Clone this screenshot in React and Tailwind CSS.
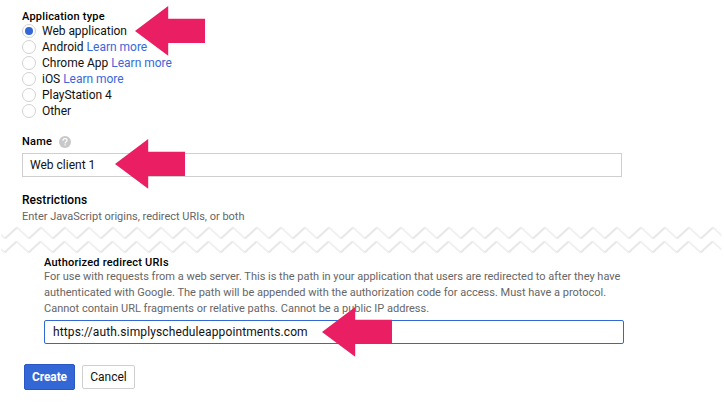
import React from "react";

const types = [
  { label: "Web application", checked: true, spacing: "tracking-[-0.04px]" },
  { label: "Android", link: true, spacing: "tracking-[-0.01px]" },
  { label: "Chrome App", link: true, spacing: "tracking-[-0.01px]" },
  { label: "iOS", link: true, spacing: "tracking-[-0.03px]" },
  { label: "PlayStation 4", spacing: "tracking-[-0.03px]" },
  { label: "Other", spacing: "tracking-[-0.03px]" },
];

function Arrow({ className }) {
  return (
    <svg className={`absolute h-[50px] w-[71px] ${className}`} viewBox="0 0 71 50" aria-hidden="true">
      <path d="M0 25 L33.2 0 V12.8 H70 V37 H33.2 V49.7 Z" fill="#e91e63" />
    </svg>
  );
}

function Zigzag({ start, y }) {
  const tiles = Array.from({ length: 31 }, (_, i) => start + i * 24);
  return (
    <g>
      {tiles.map((x) => (
        <g key={x} fill="none">
          <path d={`M${x + 12} ${y} L${x + 24} ${y + 11}`} stroke="#f0f0f0" strokeWidth="1.8" />
          <path d={`M${x} ${y + 11} L${x + 12} ${y}`} stroke="#e8e8e8" strokeWidth="2.2" />
        </g>
      ))}
    </g>
  );
}

export default function App() {
  return (
    <main className="relative h-[407px] w-[724px] overflow-hidden bg-white font-[Roboto,sans-serif] text-[12px] leading-4 text-[#111]">
      <section className="pt-[9px] pl-[22px]">
        <h2 className="h-[14px] text-[11px] font-medium tracking-[0.2px] text-black">Application type</h2>
        {types.map((t) => (
          <label key={t.label} className="flex h-4 items-center">
            <span className="mr-[6px] flex size-[14px] shrink-0 items-center justify-center rounded-full border border-[#d2d2d2]">
              {t.checked && <span className="size-2 rounded-full bg-[#3367d6]" />}
            </span>
            <span className={`whitespace-pre ${t.spacing}`}>
              {t.label}
              {t.link && <span className="text-[#3b67d8]"> Learn more</span>}
            </span>
          </label>
        ))}
      </section>

      <section className="mt-[15px] pl-[22px]">
        <div className="flex h-4 items-center">
          <h2 className="text-[11px] font-medium tracking-[0.2px] text-black">Name</h2>
          <svg className="ml-[7px] size-3" viewBox="0 0 12 12" aria-hidden="true">
            <circle cx="6" cy="6" r="6" fill="#c8c8c8" />
            <path d="M4 4.7C4 3.4 4.9 2.7 6 2.7s2 .8 2 1.8C8 5.8 6.1 5.9 6.1 7.4" fill="none" stroke="#fff" strokeWidth="1.2" />
            <rect x="5.5" y="8.3" width="1.2" height="1.2" fill="#fff" />
          </svg>
        </div>
        <div className="mt-[3px] flex h-6 w-[600px] items-center border border-[#cfcfcf] px-[7px]">Web client 1</div>
      </section>

      <section className="mt-[15px] h-[33px] pl-[22px]">
        <h2 className="h-[17px] text-[12px] font-medium tracking-[0.06px] text-black">Restrictions</h2>
        <p className="text-[11px] tracking-[-0.01px] text-[#666]">Enter JavaScript origins, redirect URIs, or both</p>
      </section>

      <svg className="block h-[29px] w-[724px]" viewBox="0 225 724 29" aria-hidden="true">
        <clipPath id="tear">
          <rect x="1" y="225" width="720.5" height="29" />
        </clipPath>
        <g clipPath="url(#tear)">
          <Zigzag start={-19} y={227.5} />
          <Zigzag start={-19.4} y={241.5} />
        </g>
      </svg>

      <section className="pt-px pl-11">
        <h2 className="h-[14px] text-[11px] font-medium tracking-[0.21px] text-black">Authorized redirect URIs</h2>
        <p className="text-[11px] whitespace-nowrap text-[#666]">
          <span className="block">For use with requests from a web server. This is the path in your application that users are redirected to after they have</span>
          <span className="block">authenticated with Google. The path will be appended with the authorization code for access. Must have a protocol.</span>
          <span className="block">Cannot contain URL fragments or relative paths. Cannot be a public IP address.</span>
        </p>
        <div className="mt-[3px] flex h-6 w-[580px] items-center rounded-[2px] border border-[#3367d6] px-2 tracking-[0.12px]">https://auth.simplyscheduleappointments.com</div>
      </section>

      <div className="mt-5 ml-6 flex items-center gap-[7px]">
        <button className="h-[26px] w-[51px] rounded-[2px] border border-[#2a56c6] bg-[#3367d6] text-[12px] font-bold tracking-[-0.1px] text-white">Create</button>
        <button className="h-6 w-[53px] rounded-[2px] border border-[#cfcfcf] bg-white text-[12px]">Cancel</button>
      </div>

      <Arrow className="top-[6px] left-[135px]" />
      <Arrow className="top-[139px] left-[115px]" />
      <Arrow className="top-[307px] left-[322px]" />
    </main>
  );
}
